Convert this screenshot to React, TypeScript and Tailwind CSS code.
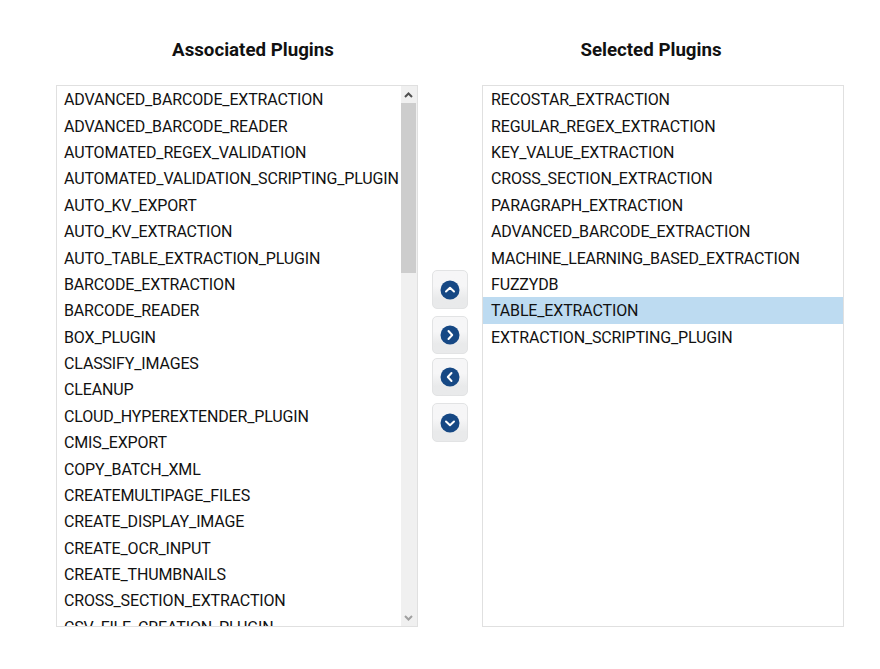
import React from "react";

const associated = [
  "ADVANCED_BARCODE_EXTRACTION",
  "ADVANCED_BARCODE_READER",
  "AUTOMATED_REGEX_VALIDATION",
  "AUTOMATED_VALIDATION_SCRIPTING_PLUGIN",
  "AUTO_KV_EXPORT",
  "AUTO_KV_EXTRACTION",
  "AUTO_TABLE_EXTRACTION_PLUGIN",
  "BARCODE_EXTRACTION",
  "BARCODE_READER",
  "BOX_PLUGIN",
  "CLASSIFY_IMAGES",
  "CLEANUP",
  "CLOUD_HYPEREXTENDER_PLUGIN",
  "CMIS_EXPORT",
  "COPY_BATCH_XML",
  "CREATEMULTIPAGE_FILES",
  "CREATE_DISPLAY_IMAGE",
  "CREATE_OCR_INPUT",
  "CREATE_THUMBNAILS",
  "CROSS_SECTION_EXTRACTION",
  "CSV_FILE_CREATION_PLUGIN",
];

const selected = [
  "RECOSTAR_EXTRACTION",
  "REGULAR_REGEX_EXTRACTION",
  "KEY_VALUE_EXTRACTION",
  "CROSS_SECTION_EXTRACTION",
  "PARAGRAPH_EXTRACTION",
  "ADVANCED_BARCODE_EXTRACTION",
  "MACHINE_LEARNING_BASED_EXTRACTION",
  "FUZZYDB",
  "TABLE_EXTRACTION",
  "EXTRACTION_SCRIPTING_PLUGIN",
];

function Row({ label, active, inset }: { label: string; active?: boolean; inset: string }) {
  return (
    <div
      className={`h-[26.39px] shrink-0 leading-[27px] tracking-[-0.15px] whitespace-nowrap text-[16px] text-[#111] ${inset} ${
        active ? "bg-[#bddbf1]" : ""
      }`}
    >
      {label}
    </div>
  );
}

function Arrow({ d, className }: { d: string; className: string }) {
  return (
    <button
      className={`flex w-9 items-center justify-center rounded-[5px] border border-[#e2e3e4] bg-gradient-to-b from-[#f6f6f7] from-40% to-[#e9eaeb] to-75% ${className}`}
    >
      <svg width="20" height="20" viewBox="0 0 20 20">
        <circle cx="10" cy="10" r="9.5" fill="#164884" />
        <path d={d} fill="none" stroke="#fff" strokeWidth="2" strokeLinecap="round" strokeLinejoin="round" />
      </svg>
    </button>
  );
}

export default function App() {
  return (
    <div className="h-[669px] w-[880px] bg-white font-['Roboto',sans-serif]">
      <div className="flex pl-[56px] pt-[39px]">
        <h2 className="h-[46px] w-[394px] text-center text-[18.72px] leading-[23px] font-bold text-[#111]">
          Associated Plugins
        </h2>
        <h2 className="ml-[32px] h-[46px] w-[338px] text-center text-[18.72px] leading-[23px] font-bold text-[#111]">
          Selected Plugins
        </h2>
      </div>
      <div className="flex pl-[56px]">
        <div className="flex h-[542px] w-[362px] border border-[#e0e0e0]">
          <div className="flex flex-1 flex-col overflow-hidden pt-[0.3px]">
            {associated.map((p) => (
              <Row key={p} label={p} inset="pl-[7px]" />
            ))}
          </div>
          <div className="flex w-[16px] shrink-0 flex-col bg-[#f0f0f0]">
            <div className="flex h-[17px] w-[15px] items-center justify-center">
              <svg width="9" height="6" viewBox="0 0 9 6">
                <path d="M1 5l3.5-3.5L8 5" fill="none" stroke="#505050" strokeWidth="2" />
              </svg>
            </div>
            <div className="h-[170px] w-[15px] bg-[#cdcdcd]" />
            <div className="flex-1" />
            <div className="flex h-[17px] w-[15px] items-center justify-center">
              <svg width="9" height="6" viewBox="0 0 9 6">
                <path d="M1 1l3.5 3.5L8 1" fill="none" stroke="#a0a0a0" strokeWidth="2" />
              </svg>
            </div>
          </div>
        </div>
        <div className="flex w-[64px] flex-col items-center pt-[185px]">
          <Arrow className="h-[39px]" d="M6 11.5L10 7.8l4 3.7" />
          <Arrow className="mt-[7px] h-[38px]" d="M8.5 6l3.7 4-3.7 4" />
          <Arrow className="mt-[4px] h-[38px]" d="M11.5 6L7.8 10l3.7 4" />
          <Arrow className="mt-[7px] h-[39px]" d="M6 8.5l4 3.7 4-3.7" />
        </div>
        <div className="flex h-[542px] w-[362px] flex-col overflow-hidden border border-[#e0e0e0] pt-[0.3px]">
          {selected.map((p) => (
            <Row key={p} label={p} inset="pl-[8px]" active={p === "TABLE_EXTRACTION"} />
          ))}
        </div>
      </div>
    </div>
  );
}
